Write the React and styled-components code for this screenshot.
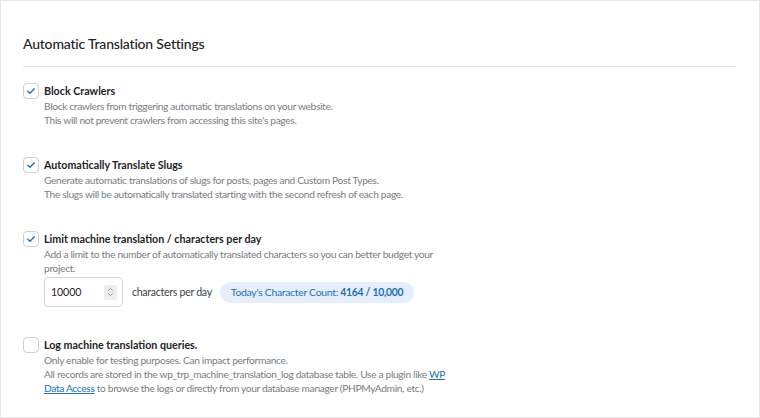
import React from "react";
import styled, { createGlobalStyle } from "styled-components";

const Global = createGlobalStyle`
  html, body { margin: 0; padding: 0; background: #ffffff; }
  body { font-family: "Lato", "Noto Sans", sans-serif; color: #1d2327; }
  * { box-sizing: border-box; }
`;

const Card = styled.div`
  width: 760px;
  height: 418px;
  border: 1px solid #e6e6e6;
  background: #fff;
  padding: 33px 23px 0 22px;
  overflow: hidden;
`;

const Title = styled.h2`
  margin: 0;
  font-size: 14px;
  letter-spacing: -0.2px;
  font-weight: 500;
  line-height: 20px;
  color: #1d2327;
`;

const Divider = styled.hr`
  margin: 12px 0 0 0;
  border: 0;
  border-top: 1px solid #e8e8e8;
`;

const List = styled.div`
  display: flex;
  flex-direction: column;
  gap: 30px;
  padding-top: 16px;
`;

const Option = styled.div`
  display: grid;
  grid-template-columns: 16px 1fr;
  column-gap: 5px;
`;

const Box = styled.span`
  width: 16px;
  height: 16px;
  border: 1px solid #d0d0d0;
  border-radius: 4px;
  display: flex;
  align-items: center;
  justify-content: center;
  background: #fff;
`;

const Body = styled.div`
  display: flex;
  flex-direction: column;
`;

const Label = styled.div`
  font-size: 10.7px;
  font-weight: 700;
  line-height: 16px;
  color: #1d2327;
`;

const Desc = styled.p`
  margin: 0;
  font-size: 10.2px;
  letter-spacing: -0.33px;
  line-height: 14px;
  color: #787c82;
  max-width: 406px;
`;

const Link = styled.a`
  color: #2271b1;
  text-decoration: underline;
`;

const LimitRow = styled.div`
  display: flex;
  align-items: center;
  margin-top: 2px;
`;

const NumberBox = styled.div`
  width: 79px;
  height: 30px;
  border: 1px solid #d6d6d6;
  border-radius: 4px;
  display: flex;
  align-items: center;
  justify-content: space-between;
  padding: 0 5px 0 6px;
  font-size: 10.6px;
  letter-spacing: -0.1px;
  color: #1d2327;
`;

const Spinner = styled.span`
  width: 13px;
  height: 15px;
  background: #ededed;
  border-radius: 2px;
  display: flex;
  align-items: center;
  justify-content: center;
`;

const Unit = styled.span`
  font-size: 10.6px;
  letter-spacing: -0.3px;
  color: #3c434a;
  margin-left: 9px;
`;

const Pill = styled.span`
  margin-left: 8px;
  height: 21px;
  padding: 0 11px;
  border-radius: 11px;
  background: #e5eefa;
  color: #2271b1;
  font-size: 10.4px;
  letter-spacing: -0.28px;
  display: inline-flex;
  align-items: center;
  white-space: pre;
  b { font-weight: 700; }
`;

const Check = () => (
  <svg width="10" height="10" viewBox="0 0 10 10">
    <path d="M1.8 5.3 L4 7.3 L8.3 2.7" fill="none" stroke="#2271b1" strokeWidth="1.4" strokeLinecap="round" strokeLinejoin="round" />
  </svg>
);

const Checkbox = ({ checked }) => <Box>{checked && <Check />}</Box>;

export default function App() {
  return (
    <>
      <Global />
      <Card>
        <Title>Automatic Translation Settings</Title>
        <Divider />
        <List>
          <Option>
            <Checkbox checked />
            <Body>
              <Label>Block Crawlers</Label>
              <Desc>
                Block crawlers from triggering automatic translations on your website.
                <br />
                This will not prevent crawlers from accessing this site's pages.
              </Desc>
            </Body>
          </Option>
          <Option>
            <Checkbox checked />
            <Body>
              <Label>Automatically Translate Slugs</Label>
              <Desc>
                Generate automatic translations of slugs for posts, pages and Custom Post Types.
                <br />
                The slugs will be automatically translated starting with the second refresh of each page.
              </Desc>
            </Body>
          </Option>
          <Option>
            <Checkbox checked />
            <Body>
              <Label>Limit machine translation / characters per day</Label>
              <Desc>
                Add a limit to the number of automatically translated characters so you can better budget your project.
              </Desc>
              <LimitRow>
                <NumberBox>
                  10000
                  <Spinner>
                    <svg width="7" height="10" viewBox="0 0 7 10">
                      <path d="M1.2 3.6 L3.5 1.4 L5.8 3.6 M1.2 6.4 L3.5 8.6 L5.8 6.4" fill="none" stroke="#8c8c8c" strokeWidth="0.9" />
                    </svg>
                  </Spinner>
                </NumberBox>
                <Unit>characters per day</Unit>
                <Pill>
                  Today's Character Count: <b>4164 / 10,000</b>
                </Pill>
              </LimitRow>
            </Body>
          </Option>
          <Option>
            <Checkbox />
            <Body>
              <Label>Log machine translation queries.</Label>
              <Desc>
                Only enable for testing purposes. Can impact performance.
                <br />
                All records are stored in the wp_trp_machine_translation_log database table. Use a plugin like{" "}
                <Link href="#">WP Data Access</Link> to browse the logs or directly from your database manager (PHPMyAdmin, etc.)
              </Desc>
            </Body>
          </Option>
        </List>
      </Card>
    </>
  );
}
